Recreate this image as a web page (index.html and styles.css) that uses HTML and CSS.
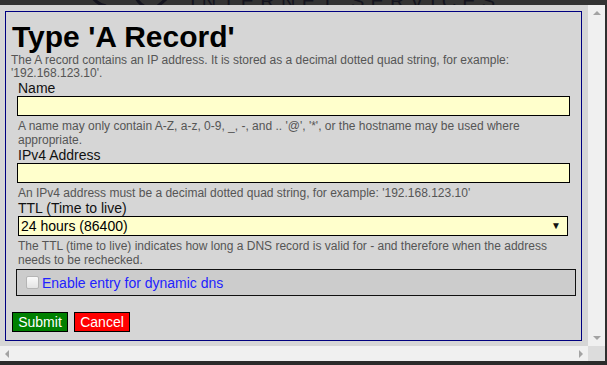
FILE: index.html
```html
<!DOCTYPE html>
<html>
<head>
<meta charset="utf-8">
<link rel="stylesheet" href="styles.css">
</head>
<body>
<div class="screen">
  <header class="topbar">
    <svg class="logo" width="90" height="5" viewBox="0 0 90 5"><path d="M2 -6 Q8 4 18 6" stroke="#151520" stroke-width="3" fill="none"/><path d="M46 -6 Q50 3 56 6" stroke="#151520" stroke-width="3" fill="none"/><path d="M70 6 L84 -6" stroke="#151520" stroke-width="3" fill="none"/></svg>
    <span class="brand">INTERNET SERVICES</span>
  </header>
  <div class="window">
    <div class="frame">
      <div class="viewport">
        <form class="panel">
          <h1 class="title">Type 'A Record'</h1>
          <p class="desc">The A record contains an IP address. It is stored as a decimal dotted quad string, for example: '192.168.123.10'.</p>
          <div class="field">
            <label class="label">Name</label>
            <input class="text" type="text">
            <p class="help">A name may only contain A-Z, a-z, 0-9, _, -, and .. '@', '*', or the hostname may be used where appropriate.</p>
          </div>
          <div class="field">
            <label class="label">IPv4 Address</label>
            <input class="text" type="text">
            <p class="help">An IPv4 address must be a decimal dotted quad string, for example: '192.168.123.10'</p>
          </div>
          <div class="field">
            <label class="label">TTL (Time to live)</label>
            <div class="selectwrap">
              <select class="select"><option>24 hours (86400)</option></select>
              <span class="caret">&#9660;</span>
            </div>
            <p class="help">The TTL (time to live) indicates how long a DNS record is valid for - and therefore when the address needs to be rechecked.</p>
          </div>
          <div class="dyn">
            <label class="dynlabel"><input class="check" type="checkbox"><span>Enable entry for dynamic dns</span></label>
          </div>
          <div class="actions">
            <button class="btn submit" type="button">Submit</button>
            <button class="btn cancel" type="button">Cancel</button>
          </div>
        </form>
      </div>
      <div class="vscroll"><span class="arrow up"></span><span class="arrow down"></span></div>
      <div class="hscroll"><span class="arrow left"></span><span class="arrow right"></span></div>
      <div class="corner"></div>
    </div>
  </div>
  <footer class="bottombar"></footer>
</div>
</body>
</html>
```
FILE: styles.css
```css
* { box-sizing: border-box; }
html, body { margin: 0; padding: 0; }
body {
  width: 607px;
  height: 365px;
  overflow: hidden;
  background: #2f2f2f;
  font-family: "Liberation Sans", Arial, sans-serif;
}
.screen { display: flex; flex-direction: column; height: 365px; }
.topbar {
  height: 5px;
  overflow: hidden;
  display: flex;
  align-items: flex-end;
  background: #333333;
}
.logo { margin-left: 88px; flex: none; }
.brand {
  margin-left: 12px;
  margin-bottom: -6px;
  font-size: 20px;
  line-height: 20px;
  letter-spacing: 6.2px;
  color: #15151f;
  white-space: nowrap;
}
.window { display: flex; height: 356px; }
.frame {
  width: 605px;
  display: grid;
  grid-template-columns: 588px 17px;
  grid-template-rows: 341px 15px;
  background: #f0f0f0;
}
.viewport {
  background: #d6d6d6;
  padding: 6px 0 0 5px;
  overflow: hidden;
}
.panel {
  width: 577px;
  height: 330px;
  border: 1px solid #000080;
  padding: 8px 5px 0 5px;
  display: flex;
  flex-direction: column;
  align-items: flex-start;
}
.title {
  margin: 0 0 0 1px;
  font-size: 30px;
  line-height: 34px;
  font-weight: bold;
  color: #000;
}
.desc {
  margin: 0;
  width: 560px;
  font-size: 12px;
  line-height: 13px;
  color: #555;
}
.field {
  margin-left: 6px;
  display: flex;
  flex-direction: column;
  align-items: flex-start;
}
.label {
  font-size: 14px;
  line-height: 16px;
  color: #111;
  padding-left: 1px;
}
.text {
  width: 553px;
  height: 20px;
  margin: 0;
  border: 1px solid #000;
  background: #ffffcc;
  padding: 0 3px;
  font: 14px "Liberation Sans", Arial, sans-serif;
}
.help {
  margin: 3px 0 0 0;
  width: 550px;
  font-size: 12px;
  line-height: 14px;
  color: #555;
  padding-left: 1px;
}
.selectwrap { position: relative; margin-left: 1px; }
.select {
  -webkit-appearance: none;
  appearance: none;
  width: 550px;
  height: 20px;
  margin: 0;
  border: 1px solid #000;
  border-radius: 0;
  background: #ffffcc;
  padding: 0 2px;
  font: 14px "Liberation Sans", Arial, sans-serif;
  color: #000;
}
.caret {
  position: absolute;
  right: 7px;
  top: 5px;
  font-size: 10px;
  line-height: 10px;
  color: #111;
  pointer-events: none;
}
.dyn {
  margin: 2px 0 0 5px;
  width: 560px;
  height: 27px;
  border: 1px solid #111;
  background: #cccccc;
  display: flex;
  align-items: center;
  padding-left: 9px;
}
.dynlabel { display: flex; align-items: center; font-size: 14px; color: #2222ff; }
.check {
  -webkit-appearance: none;
  appearance: none;
  width: 13px;
  height: 13px;
  margin: 0 3px 0 0;
  border: 1px solid #b5b5b5;
  border-radius: 2px;
  background: linear-gradient(#fafafa, #e4e4e4);
}
.actions {
  margin: 16px 0 0 1px;
  display: flex;
  gap: 6px;
}
.btn {
  height: 20px;
  width: 56px;
  margin: 0;
  padding: 0;
  border: 1px solid #000;
  font: 14px "Liberation Sans", Arial, sans-serif;
  color: #fff;
  border-radius: 0;
}
.submit { background: #008000; }
.cancel { background: #ff0000; }
.vscroll {
  background: #f0f0f0;
  display: flex;
  flex-direction: column;
  justify-content: space-between;
  align-items: center;
  padding: 6px 0 6px;
}
.hscroll {
  background: #f0f0f0;
  display: flex;
  justify-content: space-between;
  align-items: center;
  padding: 0 5px 0 5px;
}
.corner { background: #dcdcdc; }
.arrow { width: 0; height: 0; border: 4px solid transparent; }
.up { border-bottom-color: #a3a3a3; border-top-width: 0; }
.down { border-top-color: #a3a3a3; border-bottom-width: 0; }
.left { border-right-color: #a3a3a3; border-left-width: 0; }
.right { border-left-color: #a3a3a3; border-right-width: 0; }
.bottombar { height: 4px; background: #2b2b2b; }
```
